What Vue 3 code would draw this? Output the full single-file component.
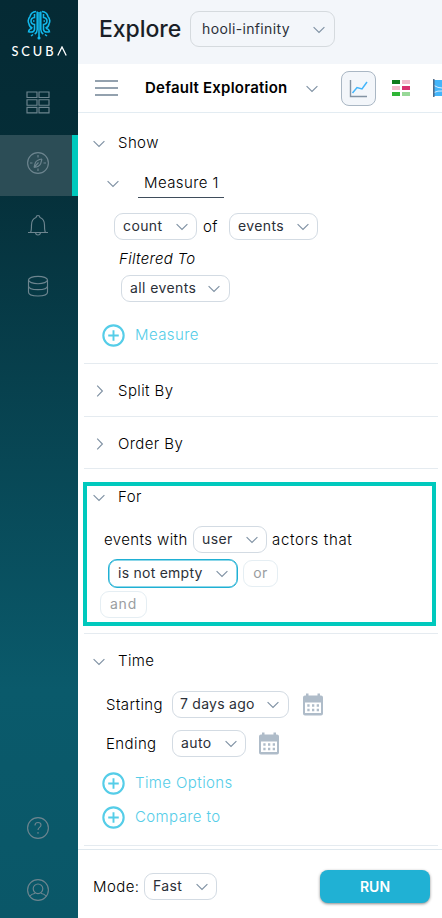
<script setup>
const minis = ['#0f7a1c', '#f2bccd', '#f2bccd', '#d8306f', '#2fb536', '#97d897']
</script>

<template>
  <svg class="defs" width="0" height="0" aria-hidden="true">
    <symbol id="down" viewBox="0 0 12 8"><path d="M.6 1.2 6 6.4l5.4-5.2" fill="none" stroke="#7f91a3" stroke-width="1.15" /></symbol>
    <symbol id="right" viewBox="0 0 8 12"><path d="M1.2.6 6.4 6l-5.2 5.4" fill="none" stroke="#7f91a3" stroke-width="1.15" /></symbol>
    <symbol id="plus" viewBox="0 0 24 24"><circle cx="12" cy="12" r="10.6" fill="none" stroke="#55cde8" stroke-width="2.2" /><path d="M12 6.5v11M6.500 12h11" stroke="#55cde8" stroke-width="2" /></symbol>
    <symbol id="calendar" viewBox="0 0 20 23">
      <path fill="#afbcc9" fill-rule="evenodd" d="M3 2.500V.5h2.500v2h9V.5H17v2h1q2 0 2 2v16q0 2-2 2H2q-2 0-2-2v-16q0-2 2-2zM2 9.500v10.500h16V9.500z" />
      <path d="M4.300 12.500h11.700M4.300 17h11.700" stroke="#afbcc9" stroke-width="2.300" stroke-dasharray="2.300 2.400" />
    </symbol>
  </svg>
  <div class="app">
    <nav class="side">
      <div class="brand">
        <svg class="logo" width="24" height="30" viewBox="0 0 24 30" fill="none" stroke="#12b9ec" stroke-width="1.550">
          <path d="M12 2v26M10.200 1.500v18q0 3-2.500 4.500M13.800 1.500v18q0 3 2.500 4.500M9 1.500Q4 2 3 6.500 0 10 2 14q.5 3 3.500 4M15 1.500q5 .5 6 5 3 3.500 1 7.500-.5 3-3.500 4M7.500 4v3.500Q4 8 4 11t3.500 3.500v5Q7 22 4.500 22H2M16.500 4v3.500q3.500.5 3.500 3.500t-3.500 3.500v5q.5 2.500 3 2.500H22M5 18.500q-3.500.5-3.500 4M19 18.500q3.500.5 3.500 4M7.500 11H6M16.500 11H18M6 24.500 4 26M18 24.500l2 1.500" />
          <circle cx="12" cy="28" r=".8" />
        </svg>
        <span class="word">SCUB<svg width="10" height="10" viewBox="0 0 10 10"><path d="M.8 9.500 5 1l4.200 8.500" fill="none" stroke="#fff" stroke-width="1.300" /></svg></span>
      </div>
      <div class="item grid-item">
        <svg width="24" height="23" viewBox="0 0 24 23"><path d="M1 1h10v5.500H1zM13 1h10v5.500H13zM1 8.700h10v5.500H1zM13 8.700h10v5.500H13zM1 16.400h10v5.500H1zM13 16.400h10v5.500H13z" /></svg>
      </div>
      <div class="item active">
        <svg width="24" height="24" viewBox="0 0 24 24"><circle cx="12" cy="12" r="10.400" /><path d="M12 4v2.500M12 17.500V20M4 12h2.500M17.500 12H20M16 8c-3 .5-5.700 1.800-6.500 3.500C8.800 13 8.500 14.500 8 16.500M8 16.500c3-.5 5.500-1.500 6.500-3.500.7-1.500.8-3 1.500-5M8 16.500l4.500-5" /></svg>
      </div>
      <div class="item bell">
        <svg width="22" height="22" viewBox="0 0 22 22"><path d="M1 18.500h20M3.500 18.500c1-1.500 1-3 1-7.500 0-4 2-6.500 4.500-7.500q.3-2 2-2t2 2c2.500 1 4.500 3.500 4.500 7.500 0 4.500 0 6 1 7.500M8.500 18.500q.2 2.500 2.500 2.500t2.500-2.500" /></svg>
      </div>
      <div class="item data">
        <svg width="22" height="22" viewBox="0 0 22 22"><ellipse cx="11" cy="5" rx="9.500" ry="3.700" /><path d="M1.500 5v12.300c0 4.900 19 4.900 19 0V5M1.500 11c0 4.900 19 4.900 19 0" /></svg>
      </div>
      <div class="item help">
        <svg width="24" height="24" viewBox="0 0 24 24"><circle cx="12" cy="12" r="10.400" /><path d="M9 9.500q0-3 3-3t3 2.600c0 2.400-3 2.100-3 4.900M12 16v1.800" /></svg>
      </div>
      <div class="item user-item">
        <svg width="24" height="24" viewBox="0 0 24 24"><circle cx="12" cy="12" r="10.400" /><circle cx="12" cy="10.800" r="4.800" /><path d="M3.500 18.500q2-2.500 5.700-3.200M20.500 18.500q-2-2.500-5.700-3.200" /></svg>
      </div>
    </nav>

    <main class="main">
      <header class="top">
        <h1>Explore</h1>
        <div class="pill dataset"><span>hooli-infinity</span><svg class="down"><use href="#down" /></svg></div>
      </header>
      <div class="toolbar">
        <div class="burger"><i></i><i></i><i></i></div>
        <strong>Default Exploration</strong>
        <svg class="down"><use href="#down" /></svg>
        <div class="chart">
          <svg width="20" height="20" viewBox="0 0 20 20" fill="none"><path d="M1.500 1v16.500H18" stroke="#8393a3" stroke-width="1.400" /><path d="m3.500 14 4.500-5.500 5 1.500 5-7" stroke="#43b5fa" stroke-width="1.500" /></svg>
        </div>
        <div class="minis"><i v-for="(c, n) in minis" :key="n" :style="{ background: c }"></i></div>
        <svg class="flow" width="9" height="18" viewBox="0 0 9 18"><path d="M0 1h9v16H0z" fill="#43b5fa" /><path d="M1 6.500q4 2.500 8 2.500M1 13.500q4-2 8-1.500" stroke="#d5edff" stroke-width="1" fill="none" /><path d="M.8 0v18" stroke="#4d6887" stroke-width="1.500" /></svg>
      </div>

      <section class="show">
        <div class="head"><svg class="down"><use href="#down" /></svg><span>Show</span></div>
        <div class="measure"><svg class="down"><use href="#down" /></svg><span>Measure 1</span></div>
        <div class="row counts">
          <div class="pill count"><span>count</span><svg class="down"><use href="#down" /></svg></div>
          <span class="of">of</span>
          <div class="pill events"><span>events</span><svg class="down"><use href="#down" /></svg></div>
        </div>
        <div class="filtered">Filtered To</div>
        <div class="pill all"><span>all events</span><svg class="down"><use href="#down" /></svg></div>
        <div class="add add-measure"><svg class="plus"><use href="#plus" /></svg><span>Measure</span></div>
      </section>

      <section class="closed split">
        <div class="head"><svg class="right"><use href="#right" /></svg><span>Split By</span></div>
      </section>
      <section class="closed order">
        <div class="head"><svg class="right"><use href="#right" /></svg><span>Order By</span></div>
      </section>

      <section class="for">
        <div class="focus">
          <div class="head"><svg class="down"><use href="#down" /></svg><span>For</span></div>
          <div class="row actors">
            <span class="with">events with</span>
            <div class="pill user"><span>user</span><svg class="down"><use href="#down" /></svg></div>
            <span class="that">actors that</span>
          </div>
          <div class="row cond">
            <div class="pill empty"><span>is not empty</span><svg class="down"><use href="#down" /></svg></div>
            <div class="pill ghost or">or</div>
          </div>
          <div class="pill ghost and">and</div>
        </div>
      </section>

      <section class="time">
        <div class="head"><svg class="down"><use href="#down" /></svg><span>Time</span></div>
        <div class="row when start">
          <span class="label">Starting</span>
          <div class="pill days"><span>7 days ago</span><svg class="down"><use href="#down" /></svg></div>
          <svg class="cal"><use href="#calendar" /></svg>
        </div>
        <div class="row when end">
          <span class="label ending">Ending</span>
          <div class="pill auto"><span>auto</span><svg class="down"><use href="#down" /></svg></div>
          <svg class="cal"><use href="#calendar" /></svg>
        </div>
        <div class="add options"><svg class="plus"><use href="#plus" /></svg><span>Time Options</span></div>
        <div class="add compare"><svg class="plus"><use href="#plus" /></svg><span>Compare to</span></div>
      </section>

      <footer class="foot">
        <span class="mode">Mode:</span>
        <div class="pill fast"><span>Fast</span><svg class="down"><use href="#down" /></svg></div>
        <button class="run">RUN</button>
      </footer>
    </main>
  </div>
</template>

<style>
body { margin: 0; overflow: hidden; }
</style>

<style scoped>
* { box-sizing: border-box; }
.defs { position: absolute; }
.app { display: flex; width: 442px; height: 918px; overflow: hidden; background: #fff; color: #000; font: 300 15px/20px Inter, "Liberation Sans", sans-serif; letter-spacing: .4px; }
svg { flex: none; display: block; }
span, strong, h1 { white-space: nowrap; }
.side { flex: none; width: 78px; display: flex; flex-direction: column; background: linear-gradient(#052a34 0, #052d37 150px, #0a5a6b 690px, #0a5768 100%); }
.brand { height: 72px; padding-top: 10px; display: flex; flex-direction: column; align-items: center; }
.word { display: flex; align-items: center; margin-top: 1px; color: #fff; font: 500 12.800px/20px Lato, sans-serif; letter-spacing: 3px; }
.item { height: 61px; display: flex; align-items: center; padding-left: 26px; }
.item svg { fill: none; stroke: #6d858f; stroke-width: 1.150; }
.grid-item { height: 63px; padding-bottom: 3px; }
.active { padding-bottom: 5px; background: #2c4d56; border-right: 6px solid #00c9bd; }
.bell, .data { padding-left: 27px; }
.bell { height: 59px; padding-bottom: 1px; }
.data { height: 62px; }
.help { margin-top: auto; }
.user-item { height: 57px; margin-top: 3px; }

.main { flex: 1; min-width: 0; display: flex; flex-direction: column; }
.top { height: 64px; padding: 11px 0 0 21px; display: flex; align-items: flex-start; background: #f3f6fa; }
h1 { margin: 0; width: 91px; font-size: 23px; line-height: 36px; font-weight: 500; letter-spacing: -.05px; color: #1a1f27; }
.pill { flex: none; height: 27px; display: flex; align-items: center; justify-content: space-between; padding: 0 8px 1px 8px; border: 1px solid #d3dbe3; border-radius: 9px; background: #fff; color: #2b3038; font-size: 14px; font-weight: 400; }
.down { width: 12px; height: 8px; position: relative; top: 1px; }
.right { width: 8px; height: 12px; }
.dataset { width: 145px; height: 36px; padding: 0 9px 0 11px; border-color: #d5dade; background: transparent; letter-spacing: .36px; }
.toolbar { height: 49px; display: flex; align-items: center; padding-left: 17px; border-bottom: 1px solid #e3ecf2; }
.burger { width: 23px; height: 16px; display: flex; flex-direction: column; justify-content: space-between; }
.burger i { height: 2px; background: #93a1ae; }
strong { width: 161px; margin-left: 27px; font-weight: 600; letter-spacing: .22px; color: #000; }
.chart { width: 35px; height: 35px; margin-left: 23px; padding: 7px; border: 1px solid #aab7c4; border-radius: 8px; background: #f3f6fa; }
.minis { display: grid; grid-template-columns: 8px 8px; gap: 2px; margin-left: 16px; }
.minis i { height: 4px; }
.flow { margin-left: 23px; }

section { margin: 0 4px 0 6px; border-bottom: 1px solid #e5ebf0; }
.head { display: flex; align-items: center; height: 20px; padding-left: 9px; }
.head span { margin-left: 13px; }
.head .right { margin-left: 3px; }
.head .right + span { margin-left: 14px; }
.row { display: flex; align-items: center; height: 27px; }
.show { height: 251px; padding-top: 20px; }
.measure { display: flex; align-items: center; height: 28px; margin-top: 17px; padding-left: 23px; }
.measure .down { top: 0; }
.measure span { width: 86px; height: 28px; padding: 3px 0 0 6px; margin-left: 19px; border-bottom: 1px solid #3f4d5b; }
.counts { margin: 15px 0 0 30px; }
.count { width: 83px; }
.of { width: 32px; padding-left: 6px; }
.events { width: 89px; }
.filtered { margin: 9px 0 0 35px; font-style: italic; letter-spacing: .3px; }
.all { width: 109px; margin: 6px 0 0 37px; }
.all, .days { padding-right: 9px; }
.add { display: flex; align-items: center; height: 24px; margin-left: 18px; color: #55cde8; }
.plus { width: 23px; height: 23px; }
.add span { margin-left: 10px; }
.add-measure { margin-top: 21px; }
.closed { height: 53px; padding-top: 17px; }
.order { height: 52px; }
.for { height: 165px; padding-top: 13px; }
.focus { width: 353px; height: 144px; margin-left: -1px; border: 4px solid #00c9bd; background: #fff; }
.focus .head { height: 21px; padding-left: 6px; }
.actors { margin-top: 19px; }
.with { width: 106px; padding-left: 17px; }
.user { width: 74px; }
.that { margin-left: 5px; letter-spacing: .65px; }
.cond { height: 29px; margin: 6px 0 0 21px; }
.empty { width: 130px; height: 29px; border: 1px solid #1fb0d4; box-shadow: inset 0 0 0 .5px #1fb0d4; padding-left: 9px; padding-right: 9px; letter-spacing: .25px; }
.ghost { color: #9a9da1; border-color: #e5eef3; justify-content: center; padding: 0 0 1px; }
.or { width: 35px; margin-left: 5px; }
.and { width: 47px; margin: 3px 0 0 13px; letter-spacing: .8px; }
.time { height: 212px; padding-top: 17px; }
.when { padding-left: 22px; }
.start { margin-top: 20px; }
.end { margin-top: 12px; }
.label { width: 66px; }
.days { width: 117px; padding-left: 7px; letter-spacing: .25px; }
.auto { width: 74px; }
.cal { width: 20px; height: 23px; margin-left: 13px; }
.start .cal { margin-left: 14px; }
.options { margin-top: 14px; }
.compare { margin-top: 10px; }
.foot { height: 69px; margin-top: 3px; border-top: 1px solid #dfe8ee; display: flex; align-items: center; padding: 5px 12px 0 15px; }
.mode { width: 51px; }
.fast { width: 73px; }
.run { width: 110px; height: 33px; margin-left: auto; padding: 0; border: 0; border-radius: 8px; background: #20b1d4; color: #fff; box-shadow: 0 1px 3px #0007; font: 600 14px/33px Inter, sans-serif; }
</style>
